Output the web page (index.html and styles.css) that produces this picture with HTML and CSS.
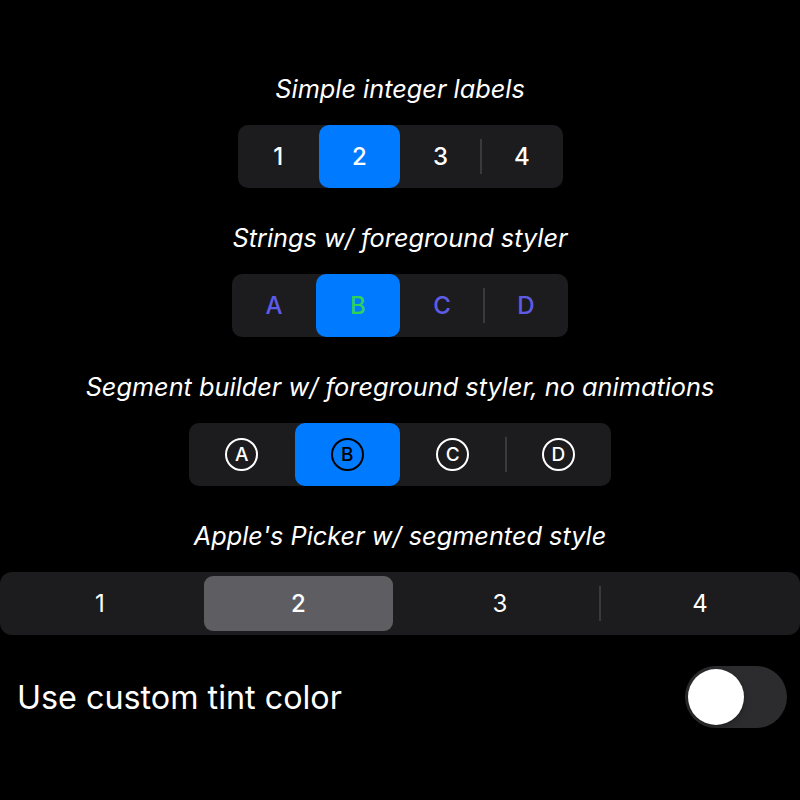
FILE: index.html
```html
<!DOCTYPE html>
<html lang="en">
<head>
<meta charset="utf-8">
<title>Segmented controls</title>
<link rel="stylesheet" href="styles.css">
</head>
<body>
<main class="page">
  <section class="group">
    <p class="title">Simple integer labels</p>
    <div class="seg seg-int">
      <div class="item">1</div>
      <div class="item selected">2</div>
      <div class="item">3</div>
      <div class="item sep">4</div>
    </div>
  </section>

  <section class="group">
    <p class="title">Strings w/ foreground styler</p>
    <div class="seg seg-str">
      <div class="item indigo">A</div>
      <div class="item selected green">B</div>
      <div class="item indigo">C</div>
      <div class="item sep indigo">D</div>
    </div>
  </section>

  <section class="group">
    <p class="title">Segment builder w/ foreground styler, no animations</p>
    <div class="seg seg-circ">
      <div class="item"><span class="circ">A</span></div>
      <div class="item selected"><span class="circ dark">B</span></div>
      <div class="item"><span class="circ">C</span></div>
      <div class="item sep"><span class="circ">D</span></div>
    </div>
  </section>

  <section class="group">
    <p class="title">Apple's Picker w/ segmented style</p>
    <div class="picker">
      <div class="pitem">1</div>
      <div class="pitem pselected">2</div>
      <div class="pitem">3</div>
      <div class="pitem sep">4</div>
    </div>
  </section>

  <div class="row">
    <span class="row-label">Use custom tint color</span>
    <span class="toggle"><span class="knob"></span></span>
  </div>
</main>
</body>
</html>
```

FILE: styles.css
```css
html, body {
  margin: 0;
  padding: 0;
  background: #000;
}

body {
  width: 800px;
  height: 800px;
  overflow: hidden;
  font-family: Inter, "Noto Sans", "Liberation Sans", sans-serif;
  color: #fff;
}

.page {
  display: flex;
  flex-direction: column;
  align-items: center;
  padding-top: 74px;
}

.group {
  display: flex;
  flex-direction: column;
  align-items: center;
  width: 100%;
  margin-bottom: 35px;
}

.title {
  margin: 0 0 21px;
  height: 30px;
  line-height: 30px;
  font-size: 25.3px;
  font-style: italic;
  font-weight: 400;
  white-space: nowrap;
}

.seg {
  display: flex;
  height: 63px;
  background: #1c1c1e;
  border-radius: 10px;
}

.seg-int { width: 325px; }
.seg-str { width: 336px; }
.seg-circ { width: 422px; }

.item {
  flex: 1;
  position: relative;
  display: flex;
  align-items: center;
  justify-content: center;
  font-size: 24px;
  font-weight: 500;
  border-radius: 10px;
}

.item.selected {
  background: #007aff;
}

.sep::before {
  content: "";
  position: absolute;
  left: -1px;
  top: 14px;
  bottom: 14px;
  width: 2px;
  background: #3a3a3c;
}

.indigo { color: #5e5ce6; }
.green { color: #30d158; }

.circ {
  box-sizing: border-box;
  width: 33px;
  height: 33px;
  border: 2.6px solid #fff;
  border-radius: 50%;
  display: flex;
  align-items: center;
  justify-content: center;
  font-size: 19px;
  font-weight: 500;
  color: #fff;
}

.circ.dark {
  border-color: #000;
  color: #000;
}

.picker {
  box-sizing: border-box;
  display: grid;
  grid-template-columns: repeat(4, 1fr);
  width: 800px;
  height: 63px;
  padding: 4px 0;
  background: #1c1c1e;
  border-radius: 12px;
}

.pitem {
  position: relative;
  display: flex;
  align-items: center;
  justify-content: center;
  font-size: 24px;
  font-weight: 400;
}

.pitem.pselected {
  margin: 0 7px 0 4px;
  background: #5e5e62;
  border-radius: 9px;
  font-weight: 500;
}

.pitem.sep::before {
  top: 10px;
  bottom: 10px;
}

.row {
  box-sizing: border-box;
  width: 100%;
  display: flex;
  align-items: center;
  justify-content: space-between;
  padding: 0 13px 0 17px;
  margin-top: -4px;
}

.row-label {
  font-size: 32.3px;
  font-weight: 400;
}

.toggle {
  box-sizing: border-box;
  width: 102px;
  height: 62px;
  padding: 3px;
  background: #2c2c2e;
  border-radius: 31px;
  display: flex;
  align-items: center;
}

.knob {
  width: 56px;
  height: 56px;
  border-radius: 50%;
  background: #fff;
  box-shadow: 0 2px 6px rgba(0, 0, 0, 0.3);
}
```
